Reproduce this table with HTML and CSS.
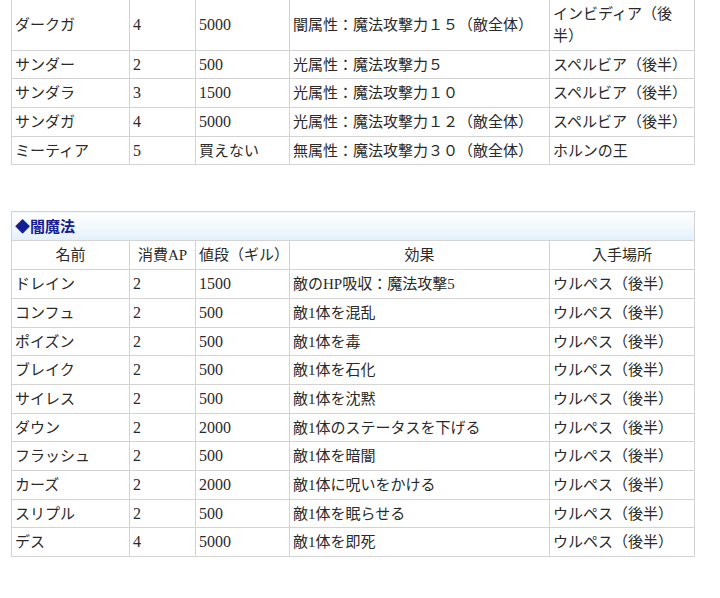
FILE: index.html
```html
<!DOCTYPE html>
<html lang="ja">
<head>
<meta charset="utf-8">
<title>魔法一覧</title>
<link rel="stylesheet" href="styles.css">
</head>
<body>
<div class="page">
  <table class="magic magic-cut">
    <colgroup><col class="c1"><col class="c2"><col class="c3"><col class="c4"><col class="c5"></colgroup>
    <tbody>
      <tr><td>ダークガ</td><td class="num">4</td><td class="num">5000</td><td>闇属性：魔法攻撃力１５（敵全体）</td><td>インビディア（後半）</td></tr>
      <tr><td>サンダー</td><td class="num">2</td><td class="num">500</td><td>光属性：魔法攻撃力５</td><td>スペルビア（後半）</td></tr>
      <tr><td>サンダラ</td><td class="num">3</td><td class="num">1500</td><td>光属性：魔法攻撃力１０</td><td>スペルビア（後半）</td></tr>
      <tr><td>サンダガ</td><td class="num">4</td><td class="num">5000</td><td>光属性：魔法攻撃力１２（敵全体）</td><td>スペルビア（後半）</td></tr>
      <tr><td>ミーティア</td><td class="num">5</td><td>買えない</td><td>無属性：魔法攻撃力３０（敵全体）</td><td>ホルンの王</td></tr>
    </tbody>
  </table>

  <table class="magic">
    <colgroup><col class="c1"><col class="c2"><col class="c3"><col class="c4"><col class="c5"></colgroup>
    <thead>
      <tr><th class="title" colspan="5">◆闇魔法</th></tr>
      <tr class="head"><th>名前</th><th>消費AP</th><th>値段（ギル）</th><th>効果</th><th>入手場所</th></tr>
    </thead>
    <tbody>
      <tr><td>ドレイン</td><td class="num">2</td><td class="num">1500</td><td>敵のHP吸収：魔法攻撃5</td><td>ウルペス（後半）</td></tr>
      <tr><td>コンフュ</td><td class="num">2</td><td class="num">500</td><td>敵1体を混乱</td><td>ウルペス（後半）</td></tr>
      <tr><td>ポイズン</td><td class="num">2</td><td class="num">500</td><td>敵1体を毒</td><td>ウルペス（後半）</td></tr>
      <tr><td>ブレイク</td><td class="num">2</td><td class="num">500</td><td>敵1体を石化</td><td>ウルペス（後半）</td></tr>
      <tr><td>サイレス</td><td class="num">2</td><td class="num">500</td><td>敵1体を沈黙</td><td>ウルペス（後半）</td></tr>
      <tr><td>ダウン</td><td class="num">2</td><td class="num">2000</td><td>敵1体のステータスを下げる</td><td>ウルペス（後半）</td></tr>
      <tr><td>フラッシュ</td><td class="num">2</td><td class="num">500</td><td>敵1体を暗闇</td><td>ウルペス（後半）</td></tr>
      <tr><td>カーズ</td><td class="num">2</td><td class="num">2000</td><td>敵1体に呪いをかける</td><td>ウルペス（後半）</td></tr>
      <tr><td>スリプル</td><td class="num">2</td><td class="num">500</td><td>敵1体を眠らせる</td><td>ウルペス（後半）</td></tr>
      <tr><td>デス</td><td class="num">4</td><td class="num">5000</td><td>敵1体を即死</td><td>ウルペス（後半）</td></tr>
    </tbody>
  </table>
</div>
</body>
</html>
```

FILE: styles.css
```css
html, body {
  margin: 0;
  padding: 0;
  background: #ffffff;
}

.page {
  padding: 0 0 0 11px;
  font-family: "Liberation Serif", "Noto Sans CJK JP", serif;
  font-size: 15px;
  color: #2a2a2a;
}

.magic {
  border-collapse: collapse;
  table-layout: fixed;
  width: 683px;
}

.magic-cut {
  margin-top: -1px;
  margin-bottom: 46px;
}

.c1 { width: 118px; }
.c2 { width: 66px; }
.c3 { width: 94px; }
.c4 { width: 260px; }
.c5 { width: 145px; }

.magic td,
.magic th {
  border: 1px solid #d3d3d3;
  padding: 3px 3px 2.7px;
  line-height: 22px;
  text-align: left;
  vertical-align: middle;
  font-weight: normal;
}

.magic td.num {
  font-size: 16px;
}

.magic .head th {
  text-align: center;
}

.magic .title {
  font-family: "Noto Sans CJK JP", sans-serif;
  font-weight: bold;
  font-size: 15px;
  color: #141c96;
  padding: 3px 3px 3px 3px;
  background: linear-gradient(to bottom, #ffffff 0%, #f4f9fd 45%, #e3f0f9 100%);
}
```
